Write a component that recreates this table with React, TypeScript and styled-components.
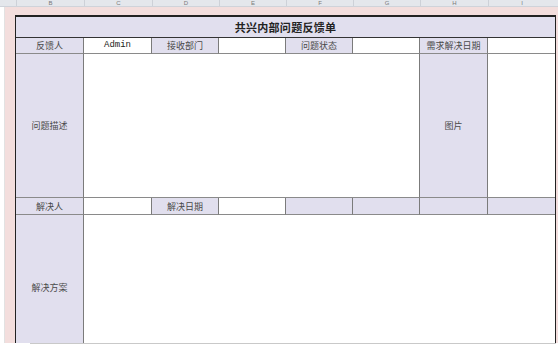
import React from 'react';
import styled, { createGlobalStyle } from 'styled-components';

const GlobalStyle = createGlobalStyle`
  html, body {
    margin: 0;
    padding: 0;
    background: #fff;
    overflow: hidden;
  }
  * {
    box-sizing: border-box;
  }
`;

const Page = styled.div`
  width: 558px;
  height: 348px;
  display: flex;
  flex-direction: column;
  font-family: "Noto Sans CJK SC", "DejaVu Sans", sans-serif;
  color: #333;
`;

const ColumnHeader = styled.div`
  height: 7px;
  display: flex;
  background: #e4e7ec;
  border-bottom: 1px solid #cfd3da;
  padding-left: 16px;
`;

const ColumnLetter = styled.div<{ $w: number }>`
  width: ${(p) => p.$w}px;
  border-left: 1px solid #cdd1d8;
  font-family: "Liberation Sans", sans-serif;
  font-size: 6px;
  line-height: 6px;
  color: #7a7a7a;
  text-align: center;
  overflow: hidden;
`;

const SheetArea = styled.div`
  height: 336px;
  display: flex;
  overflow: hidden;
`;

const Gutter = styled.div`
  width: 5px;
  background: #fff;
  border-right: 1px solid #e2e2e2;
`;

const Canvas = styled.div`
  flex: 1;
  background: #f3dedd;
  padding: 8px 0 0 10px;
`;

const Table = styled.div`
  display: grid;
  width: 541px;
  grid-template-columns: 68px 68px 67px 67px 67px 67px 68px 67px;
  grid-template-rows: 21px 16px 144px 17px 146px;
  border-left: 1px solid #222;
  border-right: 1px solid #222;
  border-top: 2px solid #222;
  background: #fff;
`;

const Cell = styled.div<{ $span?: number; $tone?: 'head' | 'blank' }>`
  grid-column: span ${(p) => p.$span ?? 1};
  background: ${(p) => (p.$tone === 'head' ? '#e1dfee' : '#fff')};
  border-right: 1px solid #7b7b7b;
  border-bottom: 1px solid #8a8a8a;
  display: flex;
  align-items: center;
  justify-content: center;
  font-size: 9px;
  line-height: 1;
  color: #4a4a4a;
`;

const TitleCell = styled.div`
  grid-column: 1 / -1;
  background: #e1dfee;
  border-bottom: 1px solid #333;
  display: flex;
  align-items: center;
  justify-content: center;
  font-size: 11px;
  font-weight: bold;
  color: #222;
  letter-spacing: 0.3px;
`;

const EdgeCell = styled(Cell)`
  border-right: none;
`;

const Mono = styled.span`
  font-family: "Liberation Mono", monospace;
  font-size: 9px;
  color: #222;
`;

const BottomBar = styled.div`
  flex: 1;
  display: flex;
  background: #fff;
`;

const BarMark = styled.div`
  width: 30px;
  border-top: 1px solid #fff;
`;

const BarLine = styled.div`
  width: 526px;
  border-top: 1px solid #c9c9c9;
`;

const letters = ['B', 'C', 'D', 'E', 'F', 'G', 'H', 'I'];
const widths = [68, 68, 67, 67, 67, 67, 68, 67];

export default function App() {
  return (
    <>
      <GlobalStyle />
      <Page>
        <ColumnHeader>
          {letters.map((l, i) => (
            <ColumnLetter key={l} $w={widths[i]}>
              {l}
            </ColumnLetter>
          ))}
        </ColumnHeader>
        <SheetArea>
          <Gutter />
          <Canvas>
            <Table>
              <TitleCell>共兴内部问题反馈单</TitleCell>

              <Cell $tone="head">反馈人</Cell>
              <Cell>
                <Mono>Admin</Mono>
              </Cell>
              <Cell $tone="head">接收部门</Cell>
              <Cell />
              <Cell $tone="head">问题状态</Cell>
              <Cell />
              <Cell $tone="head">需求解决日期</Cell>
              <EdgeCell />

              <Cell $tone="head">问题描述</Cell>
              <Cell $span={5} />
              <Cell $tone="head">图片</Cell>
              <EdgeCell />

              <Cell $tone="head">解决人</Cell>
              <Cell />
              <Cell $tone="head">解决日期</Cell>
              <Cell />
              <Cell $tone="head" />
              <Cell $tone="head" />
              <Cell $tone="head" />
              <EdgeCell $tone="head" />

              <Cell $tone="head">解决方案</Cell>
              <EdgeCell $span={7} />
            </Table>
          </Canvas>
        </SheetArea>
        <BottomBar>
          <BarMark />
          <BarLine />
        </BottomBar>
      </Page>
    </>
  );
}
